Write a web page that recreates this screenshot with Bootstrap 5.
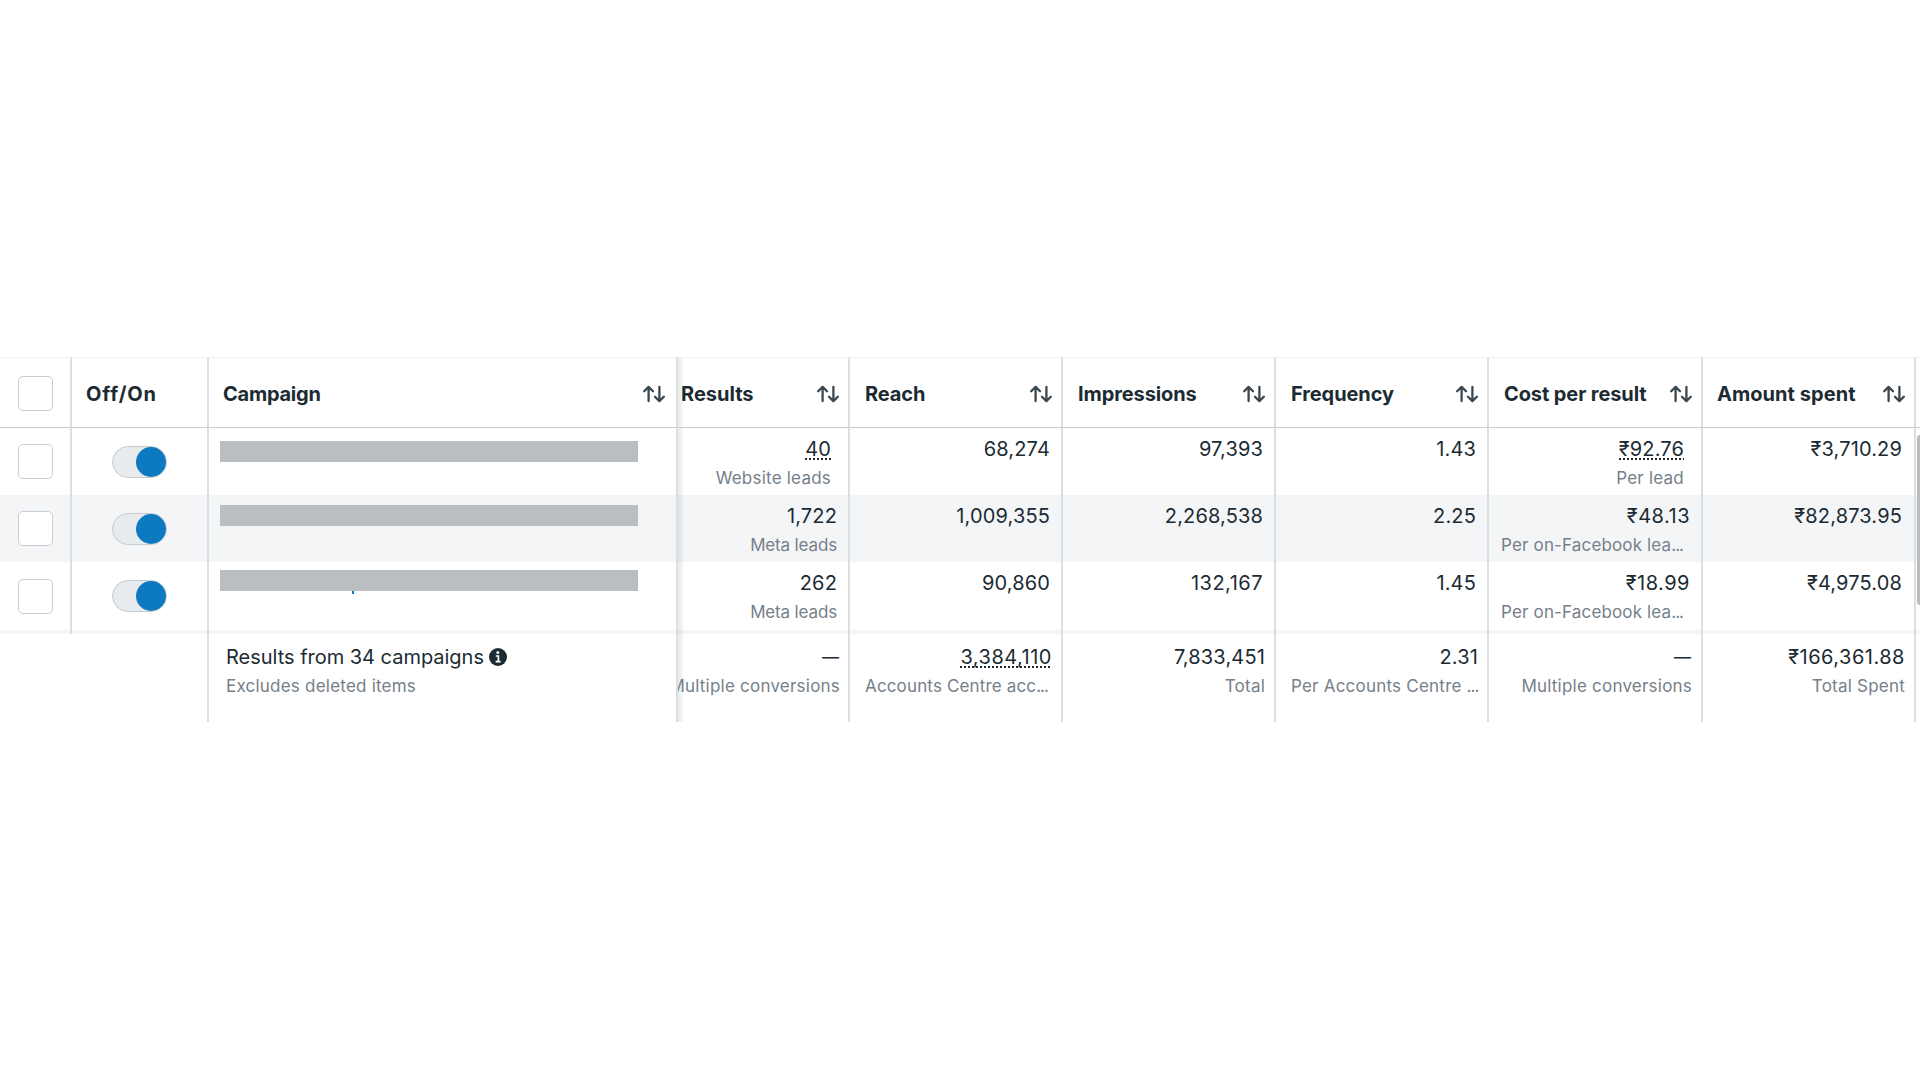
<!DOCTYPE html>
<html lang="en">
  <head>
    <meta charset="UTF-8" />
    <meta name="viewport" content="width=device-width, initial-scale=1" />
    <title>Campaigns</title>
    <link
      href="https://cdn.jsdelivr.net/npm/bootstrap@5.3.2/dist/css/bootstrap.min.css"
      rel="stylesheet"
    />
    <style>
      body {
        font-family: Inter, "Liberation Sans", sans-serif;
        color: #1c2b33;
        background-color: #fff;
      }

      .report {
        padding-top: 357px;
      }

      .report-table {
        table-layout: fixed;
        width: 1920px;
        border-collapse: separate;
        border-spacing: 0;
      }

      .report-table > :not(caption) > tr > * {
        padding: 0;
        color: #1c2b33;
        background-color: transparent;
        border: 0 solid #dcdfe2;
        border-right-width: 2px;
        box-shadow: none;
        vertical-align: top;
      }

      .report-table > :not(caption) > tr > :last-child,
      .report-table > tfoot > tr > .no-line {
        border-right-width: 0;
      }

      /* header */
      .report-table > thead > tr > th {
        height: 71px;
        padding: 2px 9px 0 15px;
        border-top: 1px solid #f1f3f5;
        border-bottom: 1px solid #c8ccd0;
        font-size: 20px;
        font-weight: 700;
        line-height: 28px;
        letter-spacing: -0.1px;
        white-space: nowrap;
        vertical-align: middle;
      }

      .report-table > thead > tr > .col-check,
      .report-table > tbody > tr > .col-check {
        padding: 0;
        vertical-align: middle;
      }

      .report-table > thead > tr > .col-check {
        padding-top: 1px;
      }

      .report-table > thead > tr > .col-toggle {
        padding-left: 14px;
        letter-spacing: 0.8px;
      }

      .report-table > thead > tr > .col-campaign {
        padding-left: 14px;
        padding-right: 11px;
        letter-spacing: -0.25px;
      }

      .report-table > thead > tr > .col-results {
        padding-left: 3px;
        letter-spacing: 0;
      }

      .report-table > thead > tr > .col-amount {
        padding-left: 14px;
        letter-spacing: 0.05px;
      }

      .sort {
        width: 22px;
        height: 18px;
        flex: none;
      }

      /* body rows */
      .report-table > tbody > tr > td {
        height: 67px;
        padding: 7px 11px 0 10px;
      }

      .report-table > tbody > tr:last-child > td {
        height: 68px;
      }

      .report-table > tbody > tr.stripe > td {
        background-color: #f4f5f7;
      }

      .report-table > tbody > tr > .col-toggle {
        padding: 0;
        vertical-align: middle;
      }

      .report-table > tbody > tr > .linked {
        padding-right: 17px;
      }

      .report-table > tbody > tr > .col-amount {
        padding-right: 12px;
      }

      /* soft edge right of the frozen columns */
      .report-table > :not(caption) > tr > .col-results {
        background-image: linear-gradient(
          to right,
          rgba(28, 60, 80, 0.1),
          rgba(28, 60, 80, 0.07) 3px,
          rgba(28, 60, 80, 0) 6px
        );
      }

      .value {
        font-size: 20px;
        line-height: 28px;
        letter-spacing: 0.15px;
        white-space: nowrap;
      }

      .note {
        font-size: 17px;
        line-height: 30px;
        letter-spacing: 0.22px;
        color: #75808a;
        white-space: nowrap;
      }

      .note-tight {
        letter-spacing: -0.15px;
      }

      .wide {
        letter-spacing: 0.5px;
      }

      .tip {
        display: inline-block;
        height: 25px;
        background: repeating-linear-gradient(
            to right,
            #1c2b33 0 2px,
            transparent 2px 4px
          )
          left bottom / 100% 2px no-repeat;
      }

      .dash {
        padding-right: 1px;
        font-size: 17px;
        font-weight: 500;
        letter-spacing: 0;
      }

      .cut {
        margin-right: 7px;
        letter-spacing: 0.15px;
      }

      .dots {
        letter-spacing: -1px;
      }

      .box {
        width: 35px;
        height: 35px;
        margin: 0 auto 0 18px;
        border: 1px solid #c9cdd1;
        border-radius: 5px;
        background-color: #fff;
      }

      .switch {
        width: 55px;
        height: 32px;
        margin-left: 40px;
        border: 1px solid #c9cccf;
        border-radius: 16px;
        background-color: #e7ebee;
      }

      .switch-knob {
        width: 30px;
        height: 30px;
        border-radius: 50%;
        background-color: #0d79c0;
      }

      .redacted {
        width: 418px;
        height: 21px;
        background-color: #babec1;
      }

      .report-table > tbody > tr > .bar-1 {
        padding: 13px 0 0 11px;
      }

      .report-table > tbody > tr > .bar-2 {
        padding: 10px 0 0 11px;
      }

      .report-table > tbody > tr > .bar-3 {
        padding: 8px 0 0 11px;
      }

      .descender {
        width: 2px;
        height: 3px;
        margin-left: 132px;
        background-color: #0d79c0;
      }

      /* scrollbar thumb sits in the last narrow column */
      .report-table > tbody > tr > .col-scroll {
        padding: 0;
      }

      .thumb {
        width: 3px;
        margin-left: auto;
        background-color: #b9bdc1;
      }

      .thumb-top {
        height: 60px;
        margin-top: 7px;
        border-top-left-radius: 3px;
      }

      .thumb-mid {
        height: 67px;
      }

      .thumb-end {
        height: 43px;
        border-bottom-left-radius: 3px;
      }

      /* totals */
      .report-table > tfoot > tr.divider > td {
        height: 4px;
        background-color: #f3f5f7;
      }

      .report-table > tfoot > tr.totals > td {
        height: 88px;
        padding: 9px 9px 0 15px;
      }

      .report-table > tfoot > tr.totals > .col-results {
        padding-left: 0;
        padding-right: 8px;
      }

      .report-table > tfoot > tr.totals > .col-scroll {
        padding: 0;
      }

      .summary {
        padding-left: 2px;
      }

      .summary .value {
        letter-spacing: -0.02px;
      }

      .info {
        width: 18px;
        height: 18px;
        margin-left: 5px;
      }
    </style>
  </head>
  <body class="overflow-hidden">
    <svg class="d-none">
      <symbol id="sort" viewBox="0 0 22 18">
        <g
          fill="none"
          stroke="#3b4850"
          stroke-width="2.3"
          stroke-linecap="round"
          stroke-linejoin="round"
        >
          <path d="M5.6 16V2.2M1.2 6.3 5.6 1.9l4.4 4.4" />
          <path d="M16.4 1.9v13.9M12 11.7l4.4 4.4 4.4-4.4" />
        </g>
      </symbol>
    </svg>

    <main class="report">
      <table class="table report-table mb-0">
        <colgroup>
          <col style="width: 72px" />
          <col style="width: 137px" />
          <col style="width: 469px" />
          <col style="width: 172px" />
          <col style="width: 213px" />
          <col style="width: 213px" />
          <col style="width: 213px" />
          <col style="width: 214px" />
          <col style="width: 213px" />
          <col style="width: 4px" />
        </colgroup>
        <thead>
          <tr>
            <th class="col-check"><div class="box"></div></th>
            <th class="col-toggle">Off/On</th>
            <th class="col-campaign">
              <div class="d-flex align-items-center justify-content-between">
                Campaign <svg class="sort"><use href="#sort" /></svg>
              </div>
            </th>
            <th class="col-results">
              <div class="d-flex align-items-center justify-content-between">
                Results <svg class="sort"><use href="#sort" /></svg>
              </div>
            </th>
            <th>
              <div class="d-flex align-items-center justify-content-between">
                Reach <svg class="sort"><use href="#sort" /></svg>
              </div>
            </th>
            <th>
              <div class="d-flex align-items-center justify-content-between">
                Impressions <svg class="sort"><use href="#sort" /></svg>
              </div>
            </th>
            <th>
              <div class="d-flex align-items-center justify-content-between">
                Frequency <svg class="sort"><use href="#sort" /></svg>
              </div>
            </th>
            <th>
              <div class="d-flex align-items-center justify-content-between">
                Cost per result <svg class="sort"><use href="#sort" /></svg>
              </div>
            </th>
            <th class="col-amount">
              <div class="d-flex align-items-center justify-content-between">
                Amount spent <svg class="sort"><use href="#sort" /></svg>
              </div>
            </th>
            <th class="p-0"></th>
          </tr>
        </thead>
        <tbody class="text-end">
          <tr>
            <td class="col-check"><div class="box"></div></td>
            <td class="col-toggle">
              <div class="switch d-flex justify-content-end">
                <div class="switch-knob"></div>
              </div>
            </td>
            <td class="bar-1"><div class="redacted"></div></td>
            <td class="col-results linked">
              <div class="value"><span class="tip">40</span></div>
              <div class="note">Website leads</div>
            </td>
            <td><div class="value">68,274</div></td>
            <td><div class="value">97,393</div></td>
            <td><div class="value">1.43</div></td>
            <td class="linked">
              <div class="value"><span class="tip">₹92.76</span></div>
              <div class="note">Per lead</div>
            </td>
            <td class="col-amount"><div class="value">₹3,710.29</div></td>
            <td class="col-scroll"><div class="thumb thumb-top"></div></td>
          </tr>
          <tr class="stripe">
            <td class="col-check"><div class="box"></div></td>
            <td class="col-toggle">
              <div class="switch d-flex justify-content-end">
                <div class="switch-knob"></div>
              </div>
            </td>
            <td class="bar-2"><div class="redacted"></div></td>
            <td class="col-results">
              <div class="value">1,722</div>
              <div class="note note-tight">Meta leads</div>
            </td>
            <td><div class="value">1,009,355</div></td>
            <td><div class="value">2,268,538</div></td>
            <td><div class="value">2.25</div></td>
            <td>
              <div class="value wide">₹48.13</div>
              <div class="note cut">
                Per on-Facebook lea<span class="dots">...</span>
              </div>
            </td>
            <td class="col-amount"><div class="value">₹82,873.95</div></td>
            <td class="col-scroll"><div class="thumb thumb-mid"></div></td>
          </tr>
          <tr>
            <td class="col-check"><div class="box"></div></td>
            <td class="col-toggle">
              <div class="switch d-flex justify-content-end">
                <div class="switch-knob"></div>
              </div>
            </td>
            <td class="bar-3">
              <div class="redacted"></div>
              <div class="descender"></div>
            </td>
            <td class="col-results">
              <div class="value">262</div>
              <div class="note note-tight">Meta leads</div>
            </td>
            <td><div class="value">90,860</div></td>
            <td><div class="value wide">132,167</div></td>
            <td><div class="value">1.45</div></td>
            <td>
              <div class="value wide">₹18.99</div>
              <div class="note cut">
                Per on-Facebook lea<span class="dots">...</span>
              </div>
            </td>
            <td class="col-amount"><div class="value">₹4,975.08</div></td>
            <td class="col-scroll"><div class="thumb thumb-end"></div></td>
          </tr>
        </tbody>
        <tfoot class="text-end">
          <tr class="divider">
            <td></td>
            <td></td>
            <td></td>
            <td class="col-results"></td>
            <td></td>
            <td></td>
            <td></td>
            <td></td>
            <td></td>
            <td></td>
          </tr>
          <tr class="totals">
            <td class="no-line"></td>
            <td></td>
            <td class="text-start">
              <div class="summary">
                <div class="value d-flex align-items-center">
                  Results from 34 campaigns
                  <svg class="info" viewBox="0 0 18 18">
                    <circle cx="9" cy="9" r="9" fill="#1c2b33" />
                    <circle cx="8.8" cy="4.6" r="1.5" fill="#fff" />
                    <path
                      d="M6.8 8h2.6v5.2M6.6 13.6h5"
                      fill="none"
                      stroke="#fff"
                      stroke-width="1.7"
                    />
                  </svg>
                </div>
                <div class="note">Excludes deleted items</div>
              </div>
            </td>
            <td class="col-results">
              <div class="value dash">—</div>
              <div class="d-flex justify-content-end overflow-hidden">
                <div class="note">Multiple conversions</div>
              </div>
            </td>
            <td>
              <div class="value wide"><span class="tip">3,384,110</span></div>
              <div class="note cut">
                Accounts Centre acc<span class="dots">...</span>
              </div>
            </td>
            <td>
              <div class="value">7,833,451</div>
              <div class="note">Total</div>
            </td>
            <td>
              <div class="value">2.31</div>
              <div class="note">
                Per Accounts Centre <span class="dots">...</span>
              </div>
            </td>
            <td>
              <div class="value dash">—</div>
              <div class="note">Multiple conversions</div>
            </td>
            <td>
              <div class="value wide">₹166,361.88</div>
              <div class="note">Total Spent</div>
            </td>
            <td class="col-scroll"></td>
          </tr>
        </tfoot>
      </table>
    </main>

    <script src="https://cdn.jsdelivr.net/npm/bootstrap@5.3.2/dist/js/bootstrap.bundle.min.js"></script>
  </body>
</html>
